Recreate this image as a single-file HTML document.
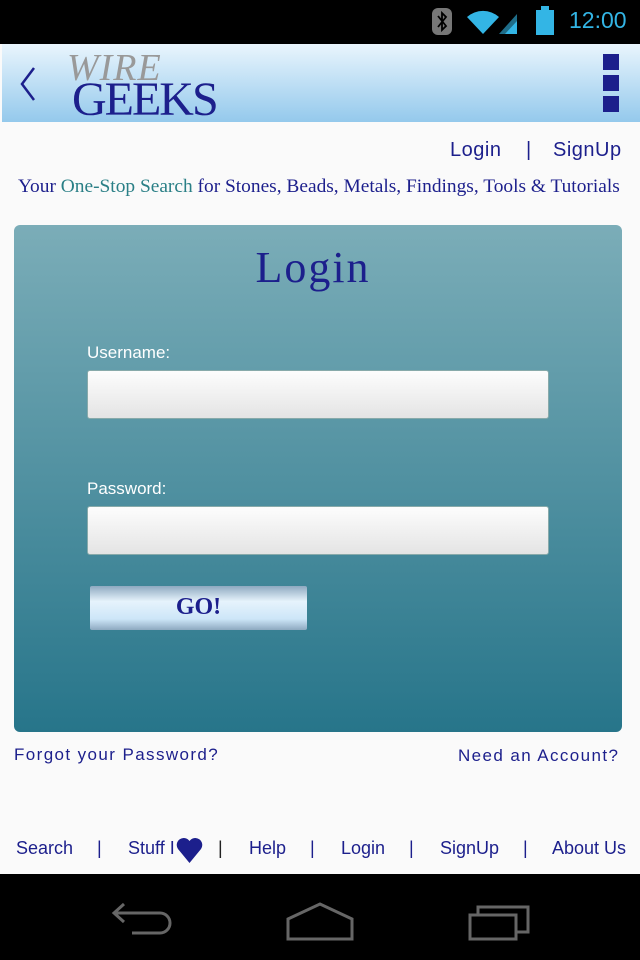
<!DOCTYPE html>
<html><head><meta charset="utf-8"><style>
*{margin:0;padding:0;box-sizing:border-box}
body{width:640px;height:960px;background:#fafafa;position:relative;overflow:hidden;font-family:"Liberation Sans",sans-serif;color:#1c1f8c}
.abs{position:absolute}
.status{left:0;top:0;width:640px;height:44px;background:#000}
.hdr{left:2px;top:44px;width:638px;height:78px;background:linear-gradient(#e9f5fd,#94c9ec)}
.serif{font-family:"Liberation Serif",serif}
.panel{left:14px;top:225px;width:608px;height:507px;border-radius:6px;background:linear-gradient(#7badb8,#27758a)}
.inp{left:87px;width:462px;height:49px;border:1px solid #8aa;border-radius:3px;background:linear-gradient(#fdfdfd,#e4e4e4)}
.lbl{color:#fff;font-size:17px;left:87px}
.nav{left:0;top:874px;width:640px;height:86px;background:#000}
.foot{top:838px;font-size:18px}
</style></head><body>
<div class="abs status">
<svg class="abs" style="left:432px;top:8px" width="20" height="27"><rect x="0" y="0" width="20" height="27" rx="6" fill="#777"/><path d="M6 8 L14 18 L10 22 L10 5 L14 9 L6 19" stroke="#000" stroke-width="1.8" fill="none"/></svg>
<svg class="abs" style="left:465px;top:8px" width="62" height="28"><path d="M18 26 L2 9 A24 24 0 0 1 34 9 Z" fill="#33b5e5"/><path d="M34 26 L52 6 L52 26Z" fill="#33b5e5" opacity=".6"/><path d="M40 26 L52 13 L52 26Z" fill="#33b5e5"/></svg>
<div class="abs" style="left:536px;top:10px;width:18px;height:25px;background:#33b5e5"></div>
<div class="abs" style="left:541px;top:6px;width:8px;height:4px;background:#33b5e5"></div>
<div class="abs" style="left:569px;top:7px;font-size:23px;color:#33b5e5">12:00</div>
</div>
<div class="abs hdr">
<svg class="abs" style="left:16px;top:22px" width="20" height="36"><path d="M16 2 L4 18 L16 34" stroke="#1c1f8c" stroke-width="2.5" fill="none"/></svg>
<div class="abs serif" style="left:65px;top:2px;font-size:38px;color:#999;letter-spacing:1px;font-style:italic">WIRE</div>
<div class="abs serif" style="left:70px;top:28px;font-size:48px;color:#1c1f8c;letter-spacing:-2px">GEEKS</div>
<div class="abs" style="left:601px;top:10px;width:16px;height:16px;background:#1c1f8c"></div>
<div class="abs" style="left:601px;top:31px;width:16px;height:16px;background:#1c1f8c"></div>
<div class="abs" style="left:601px;top:52px;width:16px;height:16px;background:#1c1f8c"></div>
</div>
<div class="abs" style="left:450px;top:139px;font-size:20px;letter-spacing:0.5px">Login</div>
<div class="abs" style="left:526px;top:139px;font-size:20px">|</div>
<div class="abs" style="left:553px;top:139px;font-size:20px;letter-spacing:0.5px">SignUp</div>
<div class="abs serif" style="left:18px;top:176px;font-size:19.4px;white-space:nowrap">Your <span style="color:#2a7f86">One-Stop Search</span> for Stones, Beads, Metals, Findings, Tools &amp; Tutorials</div>
<div class="abs panel"></div>
<div class="abs serif" style="left:0;width:626px;text-align:center;top:242px;font-size:44px;letter-spacing:2px">Login</div>
<div class="abs lbl" style="top:343px">Username:</div>
<div class="abs inp" style="top:370px"></div>
<div class="abs lbl" style="top:479px">Password:</div>
<div class="abs inp" style="top:506px"></div>
<div class="abs serif" style="left:90px;top:586px;width:217px;height:44px;border-radius:2px;background:linear-gradient(#8ea9c0,#e6f3fc 35%,#cde6f8 75%,#8ea9c0);text-align:center;font-weight:bold;font-size:24px;line-height:42px">GO!</div>
<div class="abs" style="left:14px;top:745px;font-size:17px;letter-spacing:1.4px">Forgot your Password?</div>
<div class="abs" style="left:458px;top:746px;font-size:17px;letter-spacing:1.4px">Need an Account?</div>
<div class="abs foot" style="left:16px">Search</div>
<div class="abs foot" style="left:97px">|</div>
<div class="abs foot" style="left:128px">Stuff I</div>
<svg class="abs" style="left:176px;top:836px" width="27" height="28"><path d="M13.5 27 L2 13 A6.5 6.5 0 0 1 13.5 5 A6.5 6.5 0 0 1 25 13 Z" fill="#1c1f8c"/></svg>
<div class="abs foot" style="left:218px;color:#222">|</div>
<div class="abs foot" style="left:249px">Help</div>
<div class="abs foot" style="left:310px">|</div>
<div class="abs foot" style="left:341px">Login</div>
<div class="abs foot" style="left:409px">|</div>
<div class="abs foot" style="left:440px">SignUp</div>
<div class="abs foot" style="left:523px">|</div>
<div class="abs foot" style="left:552px">About Us</div>
<div class="abs nav">
<svg class="abs" style="left:110px;top:28px" width="64" height="40"><path d="M14 2 L4 11 L14 20 M4 11 L50 11 A9 9 0 0 1 50 31 L22 31" stroke="#666" stroke-width="3" fill="none"/></svg>
<svg class="abs" style="left:286px;top:28px" width="68" height="40"><path d="M2 37 L2 17 L34 2 L66 17 L66 37 Z" stroke="#666" stroke-width="3" fill="none"/></svg>
<svg class="abs" style="left:468px;top:28px" width="64" height="40"><path d="M2 13 L48 13 L48 37 L2 37 Z M10 13 L10 5 L60 5 L60 30 L48 30" stroke="#666" stroke-width="3" fill="none"/></svg>
</div>
</body></html>
